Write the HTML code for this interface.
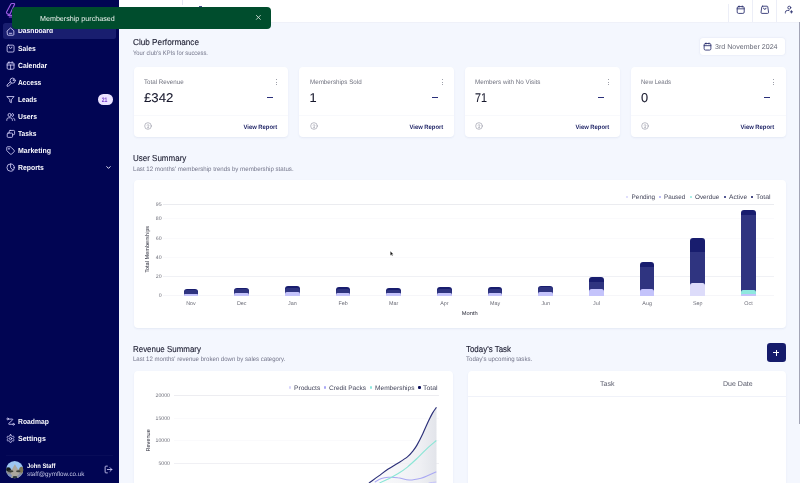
<!DOCTYPE html>
<html>
<head>
<meta charset="utf-8">
<title>Dashboard</title>
<style>
*{box-sizing:border-box;margin:0;padding:0}
html,body{width:800px;height:483px;overflow:hidden;background:#f4f7fe;font-family:"Liberation Sans",sans-serif}
body{position:relative}
.a{position:absolute}
.t{position:absolute;white-space:nowrap;text-rendering:geometricPrecision}
.L{position:absolute;left:0;top:0;width:800px;height:483px;will-change:transform;pointer-events:none}
svg{position:absolute;overflow:visible}
.card{position:absolute;background:#fff;border-radius:4px;box-shadow:0 1px 2px rgba(150,160,200,.16)}

</style>
</head>
<body>
<div class="a" style="left:0.00px;top:0.00px;width:119.00px;height:483.00px;background:#010553;"></div>
<div class="a" style="left:3.00px;top:23.00px;width:113.20px;height:16.00px;background:#191e6f;border-radius:2.5px;"></div>
<div class="a" style="left:6.00px;top:455.00px;width:107.00px;height:1.00px;background:rgba(255,255,255,.03);"></div>
<svg style="left:0;top:0" width="30" height="24" viewBox="0 0 30 24" fill="none" stroke="#9a5be0" stroke-width="1.15" stroke-linejoin="round" stroke-linecap="round"><path d="M11.9 3.5 H14 Q14.9 3.6 14.5 4.5 L10.3 13.6 Q9.6 14.7 8.4 14.2 L7 13.6 Q6.2 13 6.6 12.1 L10.9 4 Q11.2 3.5 11.9 3.5 Z"/><path d="M8 15.3 H13 M9.3 17 H13"/></svg>
<div class="a" style="left:119.00px;top:0.00px;width:681.00px;height:23.00px;background:#fff;border-bottom:1px solid #eff1f9;"></div>
<div class="a" style="left:182.00px;top:0.00px;width:1.00px;height:5.00px;background:#e3e6f2;"></div>
<div class="a" style="left:199.30px;top:6.20px;width:2.40px;height:0.80px;background:#4a4f8c;"></div>
<div class="a" style="left:728.00px;top:4.00px;width:1.00px;height:17.50px;background:#eceef7;"></div>
<div class="a" style="left:752.00px;top:0.00px;width:1.00px;height:22.00px;background:#eceef7;"></div>
<div class="a" style="left:776.00px;top:0.00px;width:1.00px;height:22.00px;background:#eceef7;"></div>
<div class="a" style="left:798.80px;top:22.00px;width:1.20px;height:402.00px;background:#a3a5b6;"></div>
<div class="a" style="left:700.00px;top:38.00px;width:85.00px;height:17.00px;background:#fff;border-radius:3px;box-shadow:0 0 2px rgba(150,160,200,.25);"></div>
<div class="a" style="left:134.00px;top:67.00px;width:154.00px;height:70.00px;background:#fff;border-radius:4px;box-shadow:0 1px 2px rgba(150,160,200,.16);"></div>
<div class="a" style="left:134.00px;top:115.00px;width:154.00px;height:0.80px;background:#f8f9fc;"></div>
<div class="a" style="left:299.00px;top:67.00px;width:155.00px;height:70.00px;background:#fff;border-radius:4px;box-shadow:0 1px 2px rgba(150,160,200,.16);"></div>
<div class="a" style="left:299.00px;top:115.00px;width:155.00px;height:0.80px;background:#f8f9fc;"></div>
<div class="a" style="left:464.80px;top:67.00px;width:155.40px;height:70.00px;background:#fff;border-radius:4px;box-shadow:0 1px 2px rgba(150,160,200,.16);"></div>
<div class="a" style="left:464.80px;top:115.00px;width:155.40px;height:0.80px;background:#f8f9fc;"></div>
<div class="a" style="left:630.50px;top:67.00px;width:155.00px;height:70.00px;background:#fff;border-radius:4px;box-shadow:0 1px 2px rgba(150,160,200,.16);"></div>
<div class="a" style="left:630.50px;top:115.00px;width:155.00px;height:0.80px;background:#f8f9fc;"></div>
<div class="a" style="left:134.00px;top:180.00px;width:652.00px;height:148.00px;background:#fff;border-radius:4px;box-shadow:0 1px 2px rgba(150,160,200,.16);"></div>
<div class="a" style="left:134.00px;top:370.50px;width:319.00px;height:130.00px;background:#fff;border-radius:4px;box-shadow:0 1px 2px rgba(150,160,200,.16);"></div>
<div class="a" style="left:467.50px;top:370.70px;width:318.50px;height:130.00px;background:#fff;border-radius:4px;box-shadow:0 1px 2px rgba(150,160,200,.16);"></div>
<div class="a" style="left:467.50px;top:395.80px;width:318.50px;height:1.00px;background:#f0f2f9;"></div>
<div class="a" style="left:766.80px;top:343.10px;width:18.90px;height:18.80px;background:#151b6b;border-radius:3.2px;"></div>
<div class="a" style="left:773.30px;top:351.90px;width:6.00px;height:1.20px;background:#fff;"></div>
<div class="a" style="left:775.70px;top:349.50px;width:1.20px;height:6.00px;background:#fff;"></div>
<svg style="left:5.80px;top:26.55px;" width="9.2" height="9.2" viewBox="0 0 24 24" fill="none" stroke="#d9d6fc" stroke-width="2.15" stroke-linecap="round" stroke-linejoin="round"><path d="M3.500 9.800 12 2.500l8.500 7.300V19.500a2 2 0 0 1-2 2H5.500a2 2 0 0 1-2-2z"/><path d="M8.800 16.500h6.400"/></svg>
<svg style="left:5.80px;top:43.75px;" width="9.2" height="9.2" viewBox="0 0 24 24" fill="none" stroke="#d9d6fc" stroke-width="2.15" stroke-linecap="round" stroke-linejoin="round"><rect x="3" y="3" width="18" height="18" rx="3"/><path d="M8.5 8a3.5 3.5 0 0 0 7 0"/></svg>
<svg style="left:5.80px;top:60.75px;" width="9.2" height="9.2" viewBox="0 0 24 24" fill="none" stroke="#d9d6fc" stroke-width="2.15" stroke-linecap="round" stroke-linejoin="round"><rect x="3" y="4.5" width="18" height="17" rx="3"/><path d="M8 2v4M16 2v4M3 10.5h18M12 10.5v11"/></svg>
<svg style="left:5.55px;top:77.00px;" width="10.3" height="10.3" viewBox="0 0 24 24" fill="none" stroke="#d9d6fc" stroke-width="1.9203883495145628" stroke-linecap="round" stroke-linejoin="round"><path d="M12.500 14.500 5.500 21.500H2.500V18.500L9.500 11.500" /><circle cx="15.500" cy="8.500" r="6"/><circle cx="16.800" cy="7.200" r=".800"/></svg>
<svg style="left:5.80px;top:94.95px;" width="9.2" height="9.2" viewBox="0 0 24 24" fill="none" stroke="#d9d6fc" stroke-width="2.15" stroke-linecap="round" stroke-linejoin="round"><path d="M3 4h18l-7 8.5V20l-4-2v-5.500z"/></svg>
<svg style="left:5.60px;top:112.05px;" width="9.6" height="9.6" viewBox="0 0 24 24" fill="none" stroke="#d9d6fc" stroke-width="2.0604166666666663" stroke-linecap="round" stroke-linejoin="round"><circle cx="9" cy="7.500" r="4"/><path d="M2 21v-1.500a5 5 0 0 1 5-5h4a5 5 0 0 1 5 5V21"/><path d="M16 3.600a4 4 0 0 1 0 7.700M22 21v-1.500a4.500 4.500 0 0 0-3-4"/></svg>
<svg style="left:5.80px;top:128.65px;" width="9.8" height="9.8" viewBox="0 0 24 24" fill="none" stroke="#d9d6fc" stroke-width="2.018367346938775" stroke-linecap="round" stroke-linejoin="round"><rect x="8" y="3.500" width="13" height="10.500" rx="2.200"/><rect x="3" y="10" width="13" height="10.500" rx="2.200" fill="#010553"/></svg>
<svg style="left:5.80px;top:146.15px;" width="9.2" height="9.2" viewBox="0 0 24 24" fill="none" stroke="#d9d6fc" stroke-width="2.15" stroke-linecap="round" stroke-linejoin="round"><path d="M12.600 2.600A2 2 0 0 0 11.200 2H4a2 2 0 0 0-2 2v7.200a2 2 0 0 0 .600 1.400l8.700 8.700a2.400 2.400 0 0 0 3.400 0l6.600-6.600a2.400 2.400 0 0 0 0-3.400z"/><circle cx="7.500" cy="7.500" r=".8"/></svg>
<svg style="left:5.80px;top:163.35px;" width="9.2" height="9.2" viewBox="0 0 24 24" fill="none" stroke="#d9d6fc" stroke-width="2.15" stroke-linecap="round" stroke-linejoin="round"><circle cx="12" cy="12" r="9.500"/><path d="M12 2.500V12l5.500 6"/></svg>
<svg style="left:5.80px;top:416.75px;" width="9.2" height="9.2" viewBox="0 0 24 24" fill="none" stroke="#d9d6fc" stroke-width="2.15" stroke-linecap="round" stroke-linejoin="round"><circle cx="4.500" cy="5" r="2.200"/><circle cx="19.500" cy="19" r="2.200"/><path d="M7.500 5.500H16.500a1.200 1.200 0 0 1 .9 2L7 17a1.200 1.200 0 0 0 .9 2H16.500"/></svg>
<svg style="left:5.80px;top:433.85px;" width="9.2" height="9.2" viewBox="0 0 24 24" fill="none" stroke="#d9d6fc" stroke-width="2.15" stroke-linecap="round" stroke-linejoin="round"><path d="M12.220 2h-.440a2 2 0 0 0-2 2v.180a2 2 0 0 1-1 1.730l-.430.250a2 2 0 0 1-2 0l-.150-.080a2 2 0 0 0-2.730.730l-.220.380a2 2 0 0 0 .730 2.730l.150.100a2 2 0 0 1 1 1.720v.510a2 2 0 0 1-1 1.740l-.150.090a2 2 0 0 0-.730 2.730l.220.380a2 2 0 0 0 2.730.730l.150-.080a2 2 0 0 1 2 0l.430.250a2 2 0 0 1 1 1.730V20a2 2 0 0 0 2 2h.440a2 2 0 0 0 2-2v-.180a2 2 0 0 1 1-1.730l.430-.250a2 2 0 0 1 2 0l.150.080a2 2 0 0 0 2.730-.730l.220-.390a2 2 0 0 0-.730-2.730l-.150-.080a2 2 0 0 1-1-1.740v-.500a2 2 0 0 1 1-1.740l.150-.090a2 2 0 0 0 .730-2.730l-.220-.380a2 2 0 0 0-2.730-.730l-.150.080a2 2 0 0 1-2 0l-.430-.250a2 2 0 0 1-1-1.730V4a2 2 0 0 0-2-2z"/><circle cx="12" cy="12" r="3"/></svg>
<svg style="left:104.80px;top:164.40px;" width="7" height="7" viewBox="0 0 24 24" fill="none" stroke="#f1f0ff" stroke-width="3.2" stroke-linecap="round" stroke-linejoin="round"><path d="M6 9l6 6 6-6"/></svg>
<svg style="left:103.60px;top:465.00px;" width="9" height="9" viewBox="0 0 24 24" fill="none" stroke="#d9d6fc" stroke-width="2.2" stroke-linecap="round" stroke-linejoin="round"><path d="M9 21H5a2 2 0 0 1-2-2V5a2 2 0 0 1 2-2h4"/><path d="M16 17l5-5-5-5M21 12H9"/></svg>
<div class="a" style="left:97.70px;top:94.00px;width:15.00px;height:10.60px;background:#ebe3ff;border-radius:5.3px;"></div>
<svg style="left:6px;top:460.5px" width="17.4" height="17.4" viewBox="0 0 17.4 17.4"><defs><clipPath id="av"><circle cx="8.700" cy="8.700" r="8.600"/></clipPath><filter id="bl" x="-20%" y="-20%" width="140%" height="140%"><feGaussianBlur stdDeviation="0.55"/></filter></defs>
<g clip-path="url(#av)"><rect width="17.400" height="17.400" fill="#9cc6f3"/><g filter="url(#bl)">
<rect x="-1" y="8.500" width="20" height="10" fill="#8b8d92"/>
<polygon points="8.900,3.300 11.800,8 13.200,12 13.500,18 4.500,18 4.800,12 6.200,8" fill="#aca89e"/>
<ellipse cx="2.200" cy="8.300" rx="2.600" ry="2" fill="#141c1a"/>
<ellipse cx="15.600" cy="8.800" rx="2.400" ry="3" fill="#7c7452"/>
<ellipse cx="4.500" cy="10.300" rx="3" ry="1.100" fill="#3b3f36"/>
<ellipse cx="12.300" cy="10.300" rx="2.200" ry="1" fill="#40423a"/>
<ellipse cx="3.500" cy="14.500" rx="2.600" ry="1.600" fill="#7f90bd"/>
<ellipse cx="9" cy="16.300" rx="2.400" ry="1.200" fill="#2f3b3c"/>
<ellipse cx="13.500" cy="14.800" rx="2.200" ry="1.300" fill="#8791b4"/>
</g></g></svg>
<svg style="left:735.70px;top:5.40px;" width="9.4" height="9.4" viewBox="0 0 24 24" fill="none" stroke="#2a2f6e" stroke-width="2.2" stroke-linecap="round" stroke-linejoin="round"><rect x="3" y="4" width="18" height="17.500" rx="3.500"/><path d="M8 2.600v2.800M16 2.600v2.800M3 9.800h18"/></svg>
<svg style="left:759.90px;top:5.20px;" width="9.6" height="9.6" viewBox="0 0 24 24" fill="none" stroke="#2a2f6e" stroke-width="2.2" stroke-linecap="round" stroke-linejoin="round"><path d="M6.500 3h11a2 2 0 0 1 2 1.700l1.900 13.500A2.500 2.500 0 0 1 19 21H5a2.500 2.500 0 0 1-2.400-2.800L4.500 4.700A2 2 0 0 1 6.500 3z"/><path d="M9 8a3 3 0 0 0 6 0"/></svg>
<svg style="left:783.50px;top:5.30px;" width="9.4" height="9.4" viewBox="0 0 24 24" fill="none" stroke="#2a2f6e" stroke-width="2.2" stroke-linecap="round" stroke-linejoin="round"><circle cx="13.500" cy="6.800" r="3.800"/><path d="M3.500 20.500v-1.500a5 5 0 0 1 5-5h4"/><path d="M19 14.500v6M16 17.500h6"/></svg>
<svg style="left:703.10px;top:41.60px;" width="9" height="9" viewBox="0 0 24 24" fill="none" stroke="#2a2f6e" stroke-width="2.3" stroke-linecap="round" stroke-linejoin="round"><rect x="3" y="4" width="18" height="17.500" rx="3.500"/><path d="M8 2.600v2.800M16 2.600v2.800M3 9.800h18"/></svg>
<svg style="left:144.00px;top:122.40px;" width="8" height="8" viewBox="0 0 24 24" fill="none" stroke="#8a8c9c" stroke-width="1.7" stroke-linecap="round" stroke-linejoin="round"><circle cx="12" cy="12" r="10"/><path d="M9.500 9.500a2.600 2.600 0 0 1 5 .800c0 1.700-2.500 2.200-2.500 3.700"/><circle cx="12" cy="17.300" r=".6"/></svg>
<div class="a" style="left:266.70px;top:96.70px;width:6.00px;height:1.30px;background:#2a2f7a;"></div>
<div class="a" style="left:276.30px;top:79.20px;width:1.10px;height:1.10px;background:#7f818f;border-radius:50%;"></div>
<div class="a" style="left:276.30px;top:81.50px;width:1.10px;height:1.10px;background:#7f818f;border-radius:50%;"></div>
<div class="a" style="left:276.30px;top:83.80px;width:1.10px;height:1.10px;background:#7f818f;border-radius:50%;"></div>
<svg style="left:309.70px;top:122.40px;" width="8" height="8" viewBox="0 0 24 24" fill="none" stroke="#8a8c9c" stroke-width="1.7" stroke-linecap="round" stroke-linejoin="round"><circle cx="12" cy="12" r="10"/><path d="M9.500 9.500a2.600 2.600 0 0 1 5 .800c0 1.700-2.500 2.200-2.500 3.700"/><circle cx="12" cy="17.300" r=".6"/></svg>
<div class="a" style="left:432.40px;top:96.70px;width:6.00px;height:1.30px;background:#2a2f7a;"></div>
<div class="a" style="left:442.00px;top:79.20px;width:1.10px;height:1.10px;background:#7f818f;border-radius:50%;"></div>
<div class="a" style="left:442.00px;top:81.50px;width:1.10px;height:1.10px;background:#7f818f;border-radius:50%;"></div>
<div class="a" style="left:442.00px;top:83.80px;width:1.10px;height:1.10px;background:#7f818f;border-radius:50%;"></div>
<svg style="left:475.40px;top:122.40px;" width="8" height="8" viewBox="0 0 24 24" fill="none" stroke="#8a8c9c" stroke-width="1.7" stroke-linecap="round" stroke-linejoin="round"><circle cx="12" cy="12" r="10"/><path d="M9.500 9.500a2.600 2.600 0 0 1 5 .800c0 1.700-2.500 2.200-2.500 3.700"/><circle cx="12" cy="17.300" r=".6"/></svg>
<div class="a" style="left:598.10px;top:96.70px;width:6.00px;height:1.30px;background:#2a2f7a;"></div>
<div class="a" style="left:607.70px;top:79.20px;width:1.10px;height:1.10px;background:#7f818f;border-radius:50%;"></div>
<div class="a" style="left:607.70px;top:81.50px;width:1.10px;height:1.10px;background:#7f818f;border-radius:50%;"></div>
<div class="a" style="left:607.70px;top:83.80px;width:1.10px;height:1.10px;background:#7f818f;border-radius:50%;"></div>
<svg style="left:641.10px;top:122.40px;" width="8" height="8" viewBox="0 0 24 24" fill="none" stroke="#8a8c9c" stroke-width="1.7" stroke-linecap="round" stroke-linejoin="round"><circle cx="12" cy="12" r="10"/><path d="M9.500 9.500a2.600 2.600 0 0 1 5 .800c0 1.700-2.500 2.200-2.500 3.700"/><circle cx="12" cy="17.300" r=".6"/></svg>
<div class="a" style="left:763.80px;top:96.70px;width:6.00px;height:1.30px;background:#2a2f7a;"></div>
<div class="a" style="left:773.40px;top:79.20px;width:1.10px;height:1.10px;background:#7f818f;border-radius:50%;"></div>
<div class="a" style="left:773.40px;top:81.50px;width:1.10px;height:1.10px;background:#7f818f;border-radius:50%;"></div>
<div class="a" style="left:773.40px;top:83.80px;width:1.10px;height:1.10px;background:#7f818f;border-radius:50%;"></div>
<div class="a" style="left:12.10px;top:7.00px;width:258.50px;height:21.80px;background:#004d2d;border-radius:4px;z-index:10;"></div>
<svg style="left:255.20px;top:14.10px;z-index:11;" width="6.8" height="6.8" viewBox="0 0 24 24" fill="none" stroke="#d6e0da" stroke-width="3.0" stroke-linecap="round" stroke-linejoin="round"><path d="M5 5l14 14M19 5 5 19"/></svg>
<div class="a" style="left:163.00px;top:204.20px;width:611.00px;height:0.70px;background:#ebecf0;"></div>
<div class="a" style="left:163.00px;top:218.00px;width:611.00px;height:0.70px;background:#fafafc;"></div>
<div class="a" style="left:163.00px;top:237.70px;width:611.00px;height:0.70px;background:#fafafc;"></div>
<div class="a" style="left:163.00px;top:256.90px;width:611.00px;height:0.70px;background:#fafafc;"></div>
<div class="a" style="left:163.00px;top:276.10px;width:611.00px;height:0.70px;background:#f0f1f5;"></div>
<div class="a" style="left:163.00px;top:295.40px;width:611.00px;height:0.70px;background:#f6f6f9;"></div>
<div class="a" style="left:183.65px;top:288.65px;width:14.70px;height:7.05px;background:#181d6e;border-radius:3.0px 3.0px 0 0;"></div>
<div class="a" style="left:183.65px;top:290.20px;width:14.70px;height:5.50px;background:#2f3480;border-radius:2.5px 2.5px 0 0;"></div>
<div class="a" style="left:183.65px;top:294.25px;width:14.70px;height:1.45px;background:#c4c3fb;border-radius:0.7px 0.7px 0 0;"></div>
<div class="a" style="left:234.33px;top:287.60px;width:14.70px;height:8.10px;background:#181d6e;border-radius:3.0px 3.0px 0 0;"></div>
<div class="a" style="left:234.33px;top:289.30px;width:14.70px;height:6.40px;background:#2f3480;border-radius:2.5px 2.5px 0 0;"></div>
<div class="a" style="left:234.33px;top:292.50px;width:14.70px;height:3.20px;background:#c4c3fb;border-radius:1.6px 1.6px 0 0;"></div>
<div class="a" style="left:285.01px;top:285.85px;width:14.70px;height:9.85px;background:#181d6e;border-radius:3.0px 3.0px 0 0;"></div>
<div class="a" style="left:285.01px;top:287.80px;width:14.70px;height:7.90px;background:#2f3480;border-radius:2.5px 2.5px 0 0;"></div>
<div class="a" style="left:285.01px;top:292.00px;width:14.70px;height:3.70px;background:#c4c3fb;border-radius:1.8px 1.8px 0 0;"></div>
<div class="a" style="left:335.69px;top:286.90px;width:14.70px;height:8.80px;background:#181d6e;border-radius:3.0px 3.0px 0 0;"></div>
<div class="a" style="left:335.69px;top:288.60px;width:14.70px;height:7.10px;background:#2f3480;border-radius:2.5px 2.5px 0 0;"></div>
<div class="a" style="left:335.69px;top:292.75px;width:14.70px;height:2.95px;background:#c4c3fb;border-radius:1.5px 1.5px 0 0;"></div>
<div class="a" style="left:386.37px;top:288.20px;width:14.70px;height:7.50px;background:#181d6e;border-radius:3.0px 3.0px 0 0;"></div>
<div class="a" style="left:386.37px;top:289.80px;width:14.70px;height:5.90px;background:#2f3480;border-radius:2.5px 2.5px 0 0;"></div>
<div class="a" style="left:386.37px;top:293.40px;width:14.70px;height:2.30px;background:#c4c3fb;border-radius:1.2px 1.2px 0 0;"></div>
<div class="a" style="left:437.05px;top:286.90px;width:14.70px;height:8.80px;background:#181d6e;border-radius:3.0px 3.0px 0 0;"></div>
<div class="a" style="left:437.05px;top:288.60px;width:14.70px;height:7.10px;background:#2f3480;border-radius:2.5px 2.5px 0 0;"></div>
<div class="a" style="left:437.05px;top:292.75px;width:14.70px;height:2.95px;background:#c4c3fb;border-radius:1.5px 1.5px 0 0;"></div>
<div class="a" style="left:487.73px;top:286.90px;width:14.70px;height:8.80px;background:#181d6e;border-radius:3.0px 3.0px 0 0;"></div>
<div class="a" style="left:487.73px;top:288.60px;width:14.70px;height:7.10px;background:#2f3480;border-radius:2.5px 2.5px 0 0;"></div>
<div class="a" style="left:487.73px;top:292.75px;width:14.70px;height:2.95px;background:#c4c3fb;border-radius:1.5px 1.5px 0 0;"></div>
<div class="a" style="left:538.41px;top:285.60px;width:14.70px;height:10.10px;background:#181d6e;border-radius:3.0px 3.0px 0 0;"></div>
<div class="a" style="left:538.41px;top:287.40px;width:14.70px;height:8.30px;background:#2f3480;border-radius:2.5px 2.5px 0 0;"></div>
<div class="a" style="left:538.41px;top:292.10px;width:14.70px;height:3.60px;background:#c4c3fb;border-radius:1.8px 1.8px 0 0;"></div>
<div class="a" style="left:589.09px;top:277.30px;width:14.70px;height:18.40px;background:#181d6e;border-radius:3.0px 3.0px 0 0;"></div>
<div class="a" style="left:589.09px;top:281.70px;width:14.70px;height:14.00px;background:#2f3480;"></div>
<div class="a" style="left:589.09px;top:289.40px;width:14.70px;height:6.30px;background:#c4c3fb;border-radius:2.5px 2.5px 0 0;"></div>
<div class="a" style="left:639.77px;top:261.90px;width:14.70px;height:33.80px;background:#181d6e;border-radius:3.0px 3.0px 0 0;"></div>
<div class="a" style="left:639.77px;top:267.40px;width:14.70px;height:28.30px;background:#2f3480;"></div>
<div class="a" style="left:639.77px;top:288.60px;width:14.70px;height:7.10px;background:#c4c3fb;border-radius:2.5px 2.5px 0 0;"></div>
<div class="a" style="left:690.45px;top:237.70px;width:14.70px;height:58.00px;background:#181d6e;border-radius:3.0px 3.0px 0 0;"></div>
<div class="a" style="left:690.45px;top:251.70px;width:14.70px;height:44.00px;background:#2f3480;"></div>
<div class="a" style="left:690.45px;top:283.00px;width:14.70px;height:12.70px;background:#dddcfa;border-radius:2.5px 2.5px 0 0;"></div>
<div class="a" style="left:741.13px;top:209.90px;width:14.70px;height:85.80px;background:#181d6e;border-radius:3.0px 3.0px 0 0;"></div>
<div class="a" style="left:741.13px;top:215.40px;width:14.70px;height:80.30px;background:#2f3480;"></div>
<div class="a" style="left:741.13px;top:289.70px;width:14.70px;height:6.00px;background:#8fe8df;border-radius:2px 2px 0 0;"></div>
<div class="a" style="left:741.13px;top:293.50px;width:14.70px;height:2.20px;background:#c4c3fb;border-radius:1.1px 1.1px 0 0;"></div>
<div class="a" style="left:626.00px;top:195.80px;width:2.20px;height:2.20px;background:#d6d4fb;border-radius:50%;"></div>
<div class="a" style="left:658.70px;top:195.80px;width:2.20px;height:2.20px;background:#a9a7f5;border-radius:50%;"></div>
<div class="a" style="left:689.50px;top:195.80px;width:2.20px;height:2.20px;background:#8fe8df;border-radius:50%;"></div>
<div class="a" style="left:723.50px;top:195.80px;width:2.20px;height:2.20px;background:#1a1f6e;border-radius:50%;"></div>
<div class="a" style="left:750.90px;top:195.80px;width:2.20px;height:2.20px;background:#0b0f5c;border-radius:50%;"></div>
<svg style="left:389.5px;top:250.5px" width="4.2" height="5.6" viewBox="0 0 6 8"><path d="M.5.3v6l1.500-1.300 1 2.300.9-.4-1-2.200h1.900z" fill="#111" stroke="#fff" stroke-width=".3"/></svg>
<div class="a" style="left:174.00px;top:395.10px;width:265.00px;height:0.70px;background:#ededf1;"></div>
<div class="a" style="left:174.00px;top:417.60px;width:265.00px;height:0.70px;background:#fafafc;"></div>
<div class="a" style="left:174.00px;top:440.10px;width:265.00px;height:0.70px;background:#fafafc;"></div>
<div class="a" style="left:174.00px;top:462.90px;width:265.00px;height:0.70px;background:#f0f0f4;"></div>
<div class="a" style="left:288.80px;top:386.40px;width:2.20px;height:2.20px;background:#d6d4fb;border-radius:50%;"></div>
<div class="a" style="left:324.10px;top:386.40px;width:2.20px;height:2.20px;background:#a9a7f5;border-radius:50%;"></div>
<div class="a" style="left:369.90px;top:386.40px;width:2.20px;height:2.20px;background:#8fe8df;border-radius:50%;"></div>
<div class="a" style="left:418.40px;top:386.40px;width:2.20px;height:2.20px;background:#0b0f5c;border-radius:50%;"></div>
<svg style="left:0;top:0" width="800" height="483" viewBox="0 0 800 483" fill="none">
<defs><linearGradient id="gf" x1="0" y1="0" x2="1" y2="0"><stop offset="0" stop-color="#f1f2f6" stop-opacity="0.3"/><stop offset="0.75" stop-color="#eeeff3" stop-opacity="0.95"/><stop offset="1" stop-color="#e2e4ea" stop-opacity="1"/></linearGradient></defs>
<path d="M368.9 483.1 C370.5 481.9 375.3 478.5 378.5 476.1 C381.7 473.8 385.0 471.1 388.2 469.0 C391.4 466.9 394.6 465.2 397.8 463.2 C401.0 461.2 404.8 459.0 407.4 456.9 C410.0 454.8 411.6 452.7 413.2 450.7 C414.8 448.7 415.5 447.8 417.1 444.9 C418.7 442.0 421.0 437.4 422.9 433.4 C424.8 429.4 427.0 424.2 428.6 420.8 C430.2 417.4 431.2 415.4 432.5 413.1 C433.8 410.9 435.8 408.3 436.5 407.3 L436.5 483.5 Z" fill="url(#gf)"/>
<path d="M374.7 482.1 C375.8 481.5 379.1 479.4 381.4 478.6 C383.6 477.8 385.5 477.5 388.2 477.3 C390.9 477.1 394.3 477.2 397.8 477.7 C401.3 478.1 405.5 479.9 409.4 480.0 C413.3 480.1 417.8 479.0 421.0 478.2 C424.2 477.4 426.1 476.3 428.6 475.2 C431.2 474.1 435.0 472.3 436.3 471.7" stroke="#a9a8f3" stroke-width="1.050"/>
<path d="M428.600 483 C431 482.600 433.500 482.300 436.300 482" stroke="#c4c3fa" stroke-width="1"/>
<path d="M379.5 483.0 C380.9 482.3 385.1 480.5 388.2 479.0 C391.2 477.5 394.6 475.8 397.8 473.8 C401.0 471.8 404.2 469.7 407.4 467.1 C410.6 464.5 413.9 461.4 417.1 458.4 C420.3 455.3 423.5 451.8 426.7 448.8 C429.9 445.8 434.7 441.9 436.3 440.5" stroke="#8be6d6" stroke-width="1.150"/>
<path d="M368.9 483.1 C370.5 481.9 375.3 478.5 378.5 476.1 C381.7 473.8 385.0 471.1 388.2 469.0 C391.4 466.9 394.6 465.2 397.8 463.2 C401.0 461.2 404.8 459.0 407.4 456.9 C410.0 454.8 411.6 452.7 413.2 450.7 C414.8 448.7 415.5 447.8 417.1 444.9 C418.7 442.0 421.0 437.4 422.9 433.4 C424.8 429.4 427.0 424.2 428.6 420.8 C430.2 417.4 431.2 415.4 432.5 413.1 C433.8 410.9 435.8 408.3 436.5 407.3" stroke="#2b2f78" stroke-width="1.150"/>
</svg>
<div class="L" style="z-index:5">
<div class="t" style="left:18.20px;top:27px;font-size:7.4px;line-height:8.88px;color:#fbfbff;font-weight:bold;transform:scaleX(0.9065);transform-origin:0 0;">Dashboard</div>
<div class="t" style="left:18.20px;top:45px;font-size:7.4px;line-height:8.88px;color:#fbfbff;font-weight:bold;transform:scaleX(0.9158);transform-origin:0 0;">Sales</div>
<div class="t" style="left:18.20px;top:62px;font-size:7.4px;line-height:8.88px;color:#fbfbff;font-weight:bold;transform:scaleX(0.9229);transform-origin:0 0;">Calendar</div>
<div class="t" style="left:18.20px;top:79px;font-size:7.4px;line-height:8.88px;color:#fbfbff;font-weight:bold;transform:scaleX(0.8999);transform-origin:0 0;">Access</div>
<div class="t" style="left:18.20px;top:96px;font-size:7.4px;line-height:8.88px;color:#fbfbff;font-weight:bold;transform:scaleX(0.8889);transform-origin:0 0;">Leads</div>
<div class="t" style="left:18.20px;top:113px;font-size:7.4px;line-height:8.88px;color:#fbfbff;font-weight:bold;transform:scaleX(0.9247);transform-origin:0 0;">Users</div>
<div class="t" style="left:18.20px;top:130px;font-size:7.4px;line-height:8.88px;color:#fbfbff;font-weight:bold;transform:scaleX(0.9010);transform-origin:0 0;">Tasks</div>
<div class="t" style="left:18.20px;top:147px;font-size:7.4px;line-height:8.88px;color:#fbfbff;font-weight:bold;transform:scaleX(0.9421);transform-origin:0 0;">Marketing</div>
<div class="t" style="left:18.20px;top:164px;font-size:7.4px;line-height:8.88px;color:#fbfbff;font-weight:bold;transform:scaleX(0.9271);transform-origin:0 0;">Reports</div>
<div class="t" style="left:18.20px;top:418px;font-size:7.4px;line-height:8.88px;color:#fbfbff;font-weight:bold;transform:scaleX(0.9143);transform-origin:0 0;">Roadmap</div>
<div class="t" style="left:18.20px;top:435px;font-size:7.4px;line-height:8.88px;color:#fbfbff;font-weight:bold;transform:scaleX(0.9535);transform-origin:0 0;">Settings</div>
<div class="t" style="left:101.45px;top:97px;font-size:6.4px;line-height:7.68px;color:#7a40cc;font-weight:bold;transform:scaleX(0.8018);transform-origin:50% 0;">21</div>
<div class="t" style="left:27.10px;top:463px;font-size:6.6px;line-height:7.92px;color:#fff;font-weight:bold;transform:scaleX(0.8806);transform-origin:0 0;">John Staff</div>
<div class="t" style="left:27.10px;top:471px;font-size:6.3px;line-height:7.56px;color:#c3c6e6;transform:scaleX(0.9942);transform-origin:0 0;">staff@gymflow.co.uk</div>
<div class="t" style="left:133.20px;top:37px;font-size:8.7px;line-height:10.44px;color:#1b1c30;-webkit-text-stroke:0.12px #1b1c30;transform:scaleX(0.9426);transform-origin:0 0;">Club Performance</div>
<div class="t" style="left:133.40px;top:50px;font-size:6.4px;line-height:7.68px;color:#73758a;transform:scaleX(0.9150);transform-origin:0 0;">Your club&#x27;s KPIs for success.</div>
<div class="t" style="left:715.40px;top:44px;font-size:7.0px;line-height:8.4px;color:#666876;transform:scaleX(1.0101);transform-origin:0 0;">3rd November 2024</div>
<div class="t" style="left:133.40px;top:153px;font-size:8.7px;line-height:10.44px;color:#1b1c30;-webkit-text-stroke:0.12px #1b1c30;transform:scaleX(0.9200);transform-origin:0 0;">User Summary</div>
<div class="t" style="left:133.40px;top:166px;font-size:6.4px;line-height:7.68px;color:#73758a;transform:scaleX(0.9591);transform-origin:0 0;">Last 12 months&#x27; membership trends by membership status.</div>
<div class="t" style="left:133.40px;top:344px;font-size:8.7px;line-height:10.44px;color:#1b1c30;-webkit-text-stroke:0.12px #1b1c30;transform:scaleX(0.9131);transform-origin:0 0;">Revenue Summary</div>
<div class="t" style="left:133.40px;top:356px;font-size:6.4px;line-height:7.68px;color:#73758a;transform:scaleX(0.9455);transform-origin:0 0;">Last 12 months&#x27; revenue broken down by sales category.</div>
<div class="t" style="left:466.40px;top:344px;font-size:8.7px;line-height:10.44px;color:#1b1c30;-webkit-text-stroke:0.12px #1b1c30;transform:scaleX(0.9125);transform-origin:0 0;">Today&#x27;s Task</div>
<div class="t" style="left:466.40px;top:356px;font-size:6.4px;line-height:7.68px;color:#73758a;transform:scaleX(0.9536);transform-origin:0 0;">Today&#x27;s upcoming tasks.</div>
<div class="t" style="left:143.90px;top:79px;font-size:6.4px;line-height:7.68px;color:#70727f;transform:scaleX(0.9692);transform-origin:0 0;">Total Revenue</div>
<div class="t" style="left:143.80px;top:90px;font-size:12.8px;line-height:15.36px;color:#17182c;-webkit-text-stroke:0.1px #17182c;transform:scaleX(1.0327);transform-origin:0 0;">£342</div>
<div class="t" style="left:241.32px;top:124px;font-size:6.3px;line-height:7.56px;color:#232869;font-weight:bold;transform:scaleX(0.9316);transform-origin:100% 0;">View Report</div>
<div class="t" style="left:309.60px;top:79px;font-size:6.4px;line-height:7.68px;color:#70727f;transform:scaleX(0.9766);transform-origin:0 0;">Memberships Sold</div>
<div class="t" style="left:309.50px;top:90px;font-size:12.8px;line-height:15.36px;color:#17182c;-webkit-text-stroke:0.1px #17182c;">1</div>
<div class="t" style="left:407.02px;top:124px;font-size:6.3px;line-height:7.56px;color:#232869;font-weight:bold;transform:scaleX(0.9316);transform-origin:100% 0;">View Report</div>
<div class="t" style="left:475.30px;top:79px;font-size:6.4px;line-height:7.68px;color:#70727f;transform:scaleX(0.9827);transform-origin:0 0;">Members with No Visits</div>
<div class="t" style="left:475.20px;top:90px;font-size:12.8px;line-height:15.36px;color:#17182c;-webkit-text-stroke:0.1px #17182c;transform:scaleX(0.8430);transform-origin:0 0;">71</div>
<div class="t" style="left:572.72px;top:124px;font-size:6.3px;line-height:7.56px;color:#232869;font-weight:bold;transform:scaleX(0.9316);transform-origin:100% 0;">View Report</div>
<div class="t" style="left:641.00px;top:79px;font-size:6.4px;line-height:7.68px;color:#70727f;transform:scaleX(0.9380);transform-origin:0 0;">New Leads</div>
<div class="t" style="left:640.90px;top:90px;font-size:12.8px;line-height:15.36px;color:#17182c;-webkit-text-stroke:0.1px #17182c;">0</div>
<div class="t" style="left:738.42px;top:124px;font-size:6.3px;line-height:7.56px;color:#232869;font-weight:bold;transform:scaleX(0.9316);transform-origin:100% 0;">View Report</div>
<div class="t" style="left:155.82px;top:202px;font-size:5.2px;line-height:6.24px;color:#6c6d78;">95</div>
<div class="t" style="left:155.82px;top:216px;font-size:5.2px;line-height:6.24px;color:#6c6d78;">80</div>
<div class="t" style="left:155.82px;top:236px;font-size:5.2px;line-height:6.24px;color:#6c6d78;">60</div>
<div class="t" style="left:155.82px;top:255px;font-size:5.2px;line-height:6.24px;color:#6c6d78;">40</div>
<div class="t" style="left:155.82px;top:274px;font-size:5.2px;line-height:6.24px;color:#6c6d78;">20</div>
<div class="t" style="left:158.71px;top:293px;font-size:5.2px;line-height:6.24px;color:#6c6d78;">0</div>
<div class="t" style="left:186.20px;top:301px;font-size:5.4px;line-height:6.48px;color:#6c6d78;">Nov</div>
<div class="t" style="left:236.88px;top:301px;font-size:5.4px;line-height:6.48px;color:#6c6d78;">Dec</div>
<div class="t" style="left:288.01px;top:301px;font-size:5.4px;line-height:6.48px;color:#6c6d78;">Jan</div>
<div class="t" style="left:338.39px;top:301px;font-size:5.4px;line-height:6.48px;color:#6c6d78;">Feb</div>
<div class="t" style="left:389.07px;top:301px;font-size:5.4px;line-height:6.48px;color:#6c6d78;">Mar</div>
<div class="t" style="left:440.20px;top:301px;font-size:5.4px;line-height:6.48px;color:#6c6d78;">Apr</div>
<div class="t" style="left:489.99px;top:301px;font-size:5.4px;line-height:6.48px;color:#6c6d78;">May</div>
<div class="t" style="left:541.41px;top:301px;font-size:5.4px;line-height:6.48px;color:#6c6d78;">Jun</div>
<div class="t" style="left:592.99px;top:301px;font-size:5.4px;line-height:6.48px;color:#6c6d78;">Jul</div>
<div class="t" style="left:642.32px;top:301px;font-size:5.4px;line-height:6.48px;color:#6c6d78;">Aug</div>
<div class="t" style="left:693.00px;top:301px;font-size:5.4px;line-height:6.48px;color:#6c6d78;">Sep</div>
<div class="t" style="left:744.28px;top:301px;font-size:5.4px;line-height:6.48px;color:#6c6d78;">Oct</div>
<div class="t" style="left:462.03px;top:311px;font-size:5.6px;line-height:6.72px;color:#2b2c3a;transform:scaleX(1.0291);transform-origin:50% 0;">Month</div>
<div class="t" style="left:125.48px;top:246.44px;font-size:5.6px;line-height:6.72px;color:#2b2c3a;transform:rotate(-90deg) scaleX(1.0010);transform-origin:50% 50%;">Total Memberships</div>
<div class="t" style="left:631.60px;top:194px;font-size:6.4px;line-height:7.68px;color:#43455a;">Pending</div>
<div class="t" style="left:664.30px;top:194px;font-size:6.4px;line-height:7.68px;color:#43455a;transform:scaleX(0.9775);transform-origin:0 0;">Paused</div>
<div class="t" style="left:695.10px;top:194px;font-size:6.4px;line-height:7.68px;color:#43455a;transform:scaleX(0.9871);transform-origin:0 0;">Overdue</div>
<div class="t" style="left:728.90px;top:194px;font-size:6.4px;line-height:7.68px;color:#43455a;transform:scaleX(1.0399);transform-origin:0 0;">Active</div>
<div class="t" style="left:756.30px;top:194px;font-size:6.4px;line-height:7.68px;color:#43455a;transform:scaleX(1.0741);transform-origin:0 0;">Total</div>
<div class="t" style="left:155.56px;top:393px;font-size:5.2px;line-height:6.24px;color:#6c6d78;">20000</div>
<div class="t" style="left:155.56px;top:416px;font-size:5.2px;line-height:6.24px;color:#6c6d78;">15000</div>
<div class="t" style="left:155.56px;top:438px;font-size:5.2px;line-height:6.24px;color:#6c6d78;">10000</div>
<div class="t" style="left:158.45px;top:461px;font-size:5.2px;line-height:6.24px;color:#6c6d78;">5000</div>
<div class="t" style="left:137.76px;top:437.04px;font-size:5.6px;line-height:6.72px;color:#2b2c3a;transform:rotate(-90deg) scaleX(0.9953);transform-origin:50% 50%;">Revenue</div>
<div class="t" style="left:293.70px;top:385px;font-size:6.4px;line-height:7.68px;color:#43455a;transform:scaleX(1.0422);transform-origin:0 0;">Products</div>
<div class="t" style="left:329.00px;top:385px;font-size:6.4px;line-height:7.68px;color:#43455a;transform:scaleX(1.0211);transform-origin:0 0;">Credit Packs</div>
<div class="t" style="left:374.90px;top:385px;font-size:6.4px;line-height:7.68px;color:#43455a;transform:scaleX(1.0297);transform-origin:0 0;">Memberships</div>
<div class="t" style="left:423.30px;top:385px;font-size:6.4px;line-height:7.68px;color:#43455a;transform:scaleX(1.0741);transform-origin:0 0;">Total</div>
<div class="t" style="left:599.60px;top:381px;font-size:7.0px;line-height:8.4px;color:#5a5c6c;transform:scaleX(1.0065);transform-origin:50% 0;">Task</div>
<div class="t" style="left:723.11px;top:381px;font-size:7.0px;line-height:8.4px;color:#5a5c6c;transform:scaleX(1.0075);transform-origin:50% 0;">Due Date</div>
</div>
<div class="L" style="z-index:11">
<div class="t" style="left:40.00px;top:15px;font-size:7.2px;line-height:8.64px;color:#eef4f0;transform:scaleX(0.9945);transform-origin:0 0;">Membership purchased</div>
</div>
</body>
</html>
